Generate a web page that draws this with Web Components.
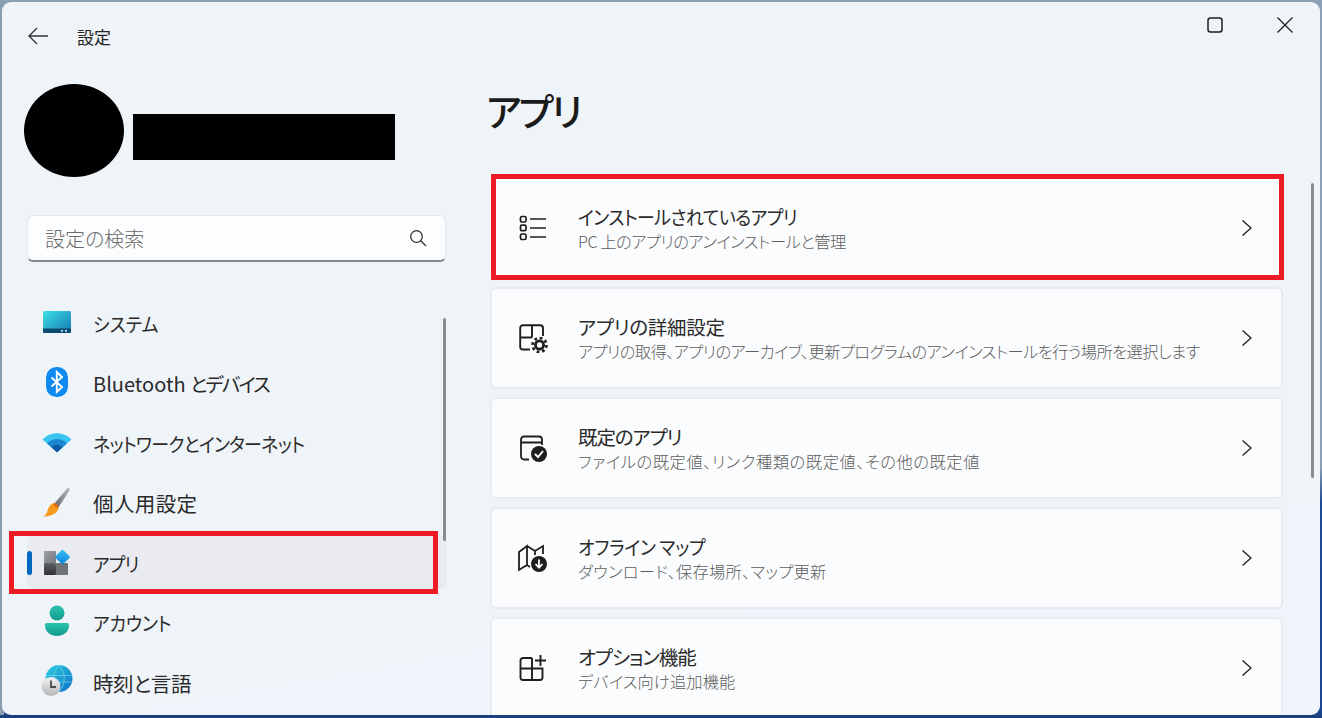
<!DOCTYPE html>
<html lang="ja"><head><meta charset="utf-8"><title>設定</title>
<style>
html,body{margin:0;height:100%;overflow:hidden}
body{font-family:"Noto Sans CJK JP","Noto Sans",sans-serif;color:#1b1b1b}
</style></head><body>
<settings-window>
  <span slot="back-title">設定</span>
  <nav-item slot="nav" icon="system" sx="0.92" ls="0">システム</nav-item>
  <nav-item slot="nav" icon="bluetooth" sx="1" ls="0"><span style="font-size:20px;letter-spacing:0">Bluetooth </span><span style="letter-spacing:-1.8px">とデバイス</span></nav-item>
  <nav-item slot="nav" icon="wifi" sx="0.92" ls="-0.75">ネットワークとインターネット</nav-item>
  <nav-item slot="nav" icon="brush" sx="1" ls="0.4" fs="20.5">個人用設定</nav-item>
  <nav-item slot="nav" icon="apps" selected sx="0.92" ls="-0.85">アプリ</nav-item>
  <nav-item slot="nav" icon="account" sx="0.92" ls="-0.2">アカウント</nav-item>
  <nav-item slot="nav" icon="time" sx="1" ls="-0.4" fs="20.5">時刻と言語</nav-item>
  <setting-card slot="cards" icon="list" highlight title-text="インストールされているアプリ" sx="0.92" tls="-0.6" sls="-0.5" sub="PC 上のアプリのアンインストールと管理"></setting-card>
  <setting-card slot="cards" icon="advanced" title-text="アプリの詳細設定" sx="1" tls="-0.25" sls="-0.59" sub="アプリの取得、アプリのアーカイブ、更新プログラムのアンインストールを行う場所を選択します"></setting-card>
  <setting-card slot="cards" icon="default" title-text="既定のアプリ" sx="1" tls="-1.1" sls="0.54" sub="ファイルの既定値、リンク種類の既定値、その他の既定値"></setting-card>
  <setting-card slot="cards" icon="map" title-text="オフライン マップ" sx="0.92" tls="-0.25" sls="0.24" sub="ダウンロード、保存場所、マップ更新"></setting-card>
  <setting-card slot="cards" icon="optional" title-text="オプション機能" sx="1" tls="-1" sls="0.1" sub="デバイス向け追加機能"></setting-card>
</settings-window>
<script>
const ICONS={
system:`<svg width="30" height="24" viewBox="0 0 30 24"><defs><linearGradient id="s" x1="0" y1="0" x2="1" y2="1"><stop offset="0" stop-color="#3fe0e4"/><stop offset="1" stop-color="#1478b4"/></linearGradient></defs><rect x="1" y="1" width="28" height="22" rx="1.5" fill="url(#s)"/><path d="M1 18.5h28V21.500a1.500 1.500 0 0 1-1.500 1.500h-25A1.500 1.500 0 0 1 1 21.500z" fill="#0d4a6e"/><rect x="19" y="20" width="2" height="1.600" fill="#bfe4f2"/><rect x="23" y="20" width="2" height="1.600" fill="#bfe4f2"/></svg>`,
bluetooth:`<svg width="24" height="32" viewBox="0 0 24 32"><rect x="1" y="1" width="22" height="30" rx="10.500" fill="#0f8af0"/><path d="M6.500 11.500 17 21l-5.200 5V6l5.200 5L6.500 20.500" fill="none" stroke="#fff" stroke-width="1.900"/></svg>`,
wifi:`<svg width="30" height="24" viewBox="0 0 30 24"><path d="M0.500 9.500C8 1 22 1 29.500 9.500L15 22z" fill="#38c5f4"/><path d="M5 13.500C10.500 7.500 19.500 7.500 25 13.500L15 22z" fill="#1c87d0"/><path d="M9.500 17.500C12.500 13.800 17.500 13.800 20.500 17.500L15 22.500z" fill="#0c5ca6"/></svg>`,
brush:`<svg width="30" height="32" viewBox="0 0 30 32"><defs><linearGradient id="b" x1="0" y1="1" x2="1" y2="0"><stop offset="0" stop-color="#5f6368"/><stop offset="1" stop-color="#b9bdc2"/></linearGradient></defs><path d="M12 18 25 2.500c1.500-1.500 3.500.3 2.500 2L16 22z" fill="url(#b)"/><path d="M11 17.500c2-1 5 1 5.500 4.500C16 27 9 31 1 30.500 5 28.500 5 26 6 23c1-3 3-5 5-5.500z" fill="#f59a1c"/><path d="M11 17.500c2-1 5 1 5.500 4.500-2.500-.5-5-2-5.500-4.500z" fill="#e56a12"/></svg>`,
apps:`<svg width="28" height="28" viewBox="0 0 28 28"><defs><linearGradient id="a1" x1="0" y1="0" x2="1" y2="1"><stop offset="0" stop-color="#9ea2a7"/><stop offset="1" stop-color="#74787d"/></linearGradient><linearGradient id="a2" x1="0" y1="0" x2="0" y2="1"><stop offset="0" stop-color="#5e6165"/><stop offset="1" stop-color="#2f3134"/></linearGradient><linearGradient id="a3" x1="0" y1="0" x2="1" y2="1"><stop offset="0" stop-color="#36c3f7"/><stop offset="1" stop-color="#0f7fdb"/></linearGradient></defs><rect x="1" y="3" width="12" height="12" rx="1" fill="url(#a1)"/><rect x="1" y="15" width="12" height="12" rx="1" fill="url(#a2)"/><rect x="13" y="15" width="12" height="12" rx="1" fill="#6f7377"/><rect x="14" y="3.500" width="11" height="11" rx="1" fill="url(#a3)" transform="rotate(45 19.500 9)"/></svg>`,
account:`<svg width="26" height="32" viewBox="0 0 26 32"><defs><linearGradient id="u" x1="0" y1="0" x2="0" y2="1"><stop offset="0" stop-color="#2bc3ad"/><stop offset="1" stop-color="#12998f"/></linearGradient></defs><circle cx="13" cy="8" r="7.500" fill="url(#u)"/><path d="M1 19.500a1.500 1.500 0 0 1 1.500-1.500h21a1.500 1.500 0 0 1 1.500 1.500v1C25 27 19 31 13 31S1 27 1 20.500z" fill="url(#u)"/></svg>`,
time:`<svg width="32" height="32" viewBox="0 0 32 32"><defs><linearGradient id="g" x1="0" y1="0" x2="1" y2="1"><stop offset="0" stop-color="#2fd0e0"/><stop offset="1" stop-color="#0f6fc6"/></linearGradient><linearGradient id="c" x1="0" y1="0" x2="0" y2="1"><stop offset="0" stop-color="#f2f2f2"/><stop offset="1" stop-color="#b6b6b6"/></linearGradient></defs><circle cx="18" cy="13.500" r="13.500" fill="url(#g)"/><path d="M5 10.500h26M5 17h26M18 0c-7 8-7 19 0 27M18 0c7 8 7 19 0 27" stroke="#8fe3ee" stroke-opacity=".55" fill="none"/><circle cx="10" cy="21.500" r="9.500" fill="url(#c)"/><path d="M10 15.500v6.500h5" stroke="#4c4c4c" stroke-width="1.800" fill="none"/></svg>`,
list:`<svg width="28" height="28" viewBox="0 0 28 28" fill="none" stroke="#1f1f1f" stroke-width="1.700"><rect x="1.500" y="2.500" width="5.500" height="5.500" rx="1.300"/><rect x="1.500" y="11.200" width="5.500" height="5.500" rx="1.300"/><rect x="1.500" y="20" width="5.500" height="5.500" rx="1.300"/><path d="M11 5h16M11 14h16M11 23h16"/></svg>`,
advanced:`<svg width="30" height="30" viewBox="0 0 30 30"><path d="M12 26.500H5A2.800 2.800 0 0 1 2.200 23.700V5A2.800 2.800 0 0 1 5 2.200h17.200A2.800 2.800 0 0 1 25 5v8M2.200 14.500H14M14 2.200v12.300" fill="none" stroke="#1f1f1f" stroke-width="1.900"/><circle cx="21.500" cy="22" r="5.500" fill="#1f1f1f"/><circle cx="21.500" cy="22" r="7" fill="none" stroke="#1f1f1f" stroke-width="2.600" stroke-dasharray="2.750 2.750"/><circle cx="21.500" cy="22" r="2.700" fill="#fbfcfe"/></svg>`,
default:`<svg width="30" height="30" viewBox="0 0 30 30"><path d="M11 26.500H6a3 3 0 0 1-3-3v-17a3 3 0 0 1 3-3h15a3 3 0 0 1 3 3V12M3 9.500h21" fill="none" stroke="#1f1f1f" stroke-width="1.800"/><circle cx="21" cy="21" r="8" fill="#1f1f1f"/><path d="M17 21l3 3 5-6" fill="none" stroke="#fff" stroke-width="1.900"/></svg>`,
map:`<svg width="32" height="30" viewBox="0 0 32 30"><path d="M2 9 10 3v19l-8 5V9zM10 3l8 5 8-5v8M18 8v4M10 22l3 2" fill="none" stroke="#1f1f1f" stroke-width="1.800"/><circle cx="22" cy="21" r="8" fill="#1f1f1f"/><path d="M22 16.500v8M18.500 21l3.500 3.700 3.500-3.700" fill="none" stroke="#fff" stroke-width="1.800"/></svg>`,
optional:`<svg width="30" height="30" viewBox="0 0 30 30" fill="none" stroke="#1f1f1f" stroke-width="1.900"><path d="M14 5H5a2.500 2.500 0 0 0-2.500 2.500v17A2.500 2.500 0 0 0 5 27h17a2.500 2.500 0 0 0 2.500-2.500V15.500H2.500M14 5v22"/><path d="M22.500 2v11M17 7.500h11"/></svg>`
};
function def(name,html,init){
  customElements.define(name,class extends HTMLElement{
    constructor(){super();this.attachShadow({mode:"open"}).innerHTML=html;}
    connectedCallback(){init&&init(this,this.shadowRoot);}
  });
}
def("settings-window",`<style>
:host{display:flex;box-sizing:border-box;width:1322px;height:718px;padding:2px 2px 3px 2px;
 background:linear-gradient(to top,#1c3f7e 0 3px,transparent 3px),linear-gradient(to right,#8a9db1 0 4px,transparent 4px),linear-gradient(180deg,#8ba0b4 0,#8ba0b4 65%,#1d4a94 70%,#1b4590 100%)}
.win{flex:1;position:relative;overflow:hidden;border-radius:9px;display:flex;flex-direction:column;background:linear-gradient(170deg,#eff4f9 0%,#eff4f9 70%,#f0f4fc 100%)}
.bar{height:72px;flex:none;display:flex;align-items:center;padding-left:26px;box-sizing:border-box;padding-bottom:4px}
.bar .t{margin-left:28px;font-size:17px;font-feature-settings:"palt";color:#222;font-weight:400}
.bar .ctl{margin-left:auto;display:flex;gap:54px;padding-right:27px;align-items:center;align-self:flex-start;margin-top:15px}
svg{display:block}
.cols{flex:1;display:flex;min-height:0}
.side{width:468px;flex:none;box-sizing:border-box;display:flex;flex-direction:column}
.prof{display:flex;padding:10px 0 0 22px;height:139px;box-sizing:border-box}
.ava{width:100px;height:93px;background:#000;border-radius:50%}
.nm{width:262px;height:46px;background:#000;margin:30px 0 0 9px}
.search{margin:2px 24px 0 25px;height:47px;box-sizing:border-box;background:#fcfdfe;border-radius:6px;border:1px solid #e3e7eb;border-bottom:2px solid #85888c;display:flex;align-items:center;padding:0 18px 0 17px;justify-content:space-between;font-size:20px;color:#6b6b6b;font-feature-settings:"palt";font-weight:300}
.nav{margin-top:33px;padding:0 23px 0 25px;display:flex;flex-direction:column;gap:5.900px}
.main{flex:1;padding-left:20px;padding-right:37px;min-width:0;position:relative}
h1{margin:8px 0 -8px -4px;font-size:38px;font-weight:500;line-height:56px;height:103px;font-feature-settings:"palt";letter-spacing:-2.500px;color:#1b1b1b;box-sizing:border-box}
.cards{display:flex;flex-direction:column;gap:8px}
.thumb{position:absolute;width:3px;border-radius:2px;background:#8a8c8f}
</style>
<div class="win">
 <div class="bar">
  <svg width="21" height="18" viewBox="0 0 21 18" fill="none" stroke="#333" stroke-width="1.300"><path d="M1 9h19M9 1 1 9l8 8"/></svg>
  <span class="t"><slot name="back-title"></slot></span>
  <span class="ctl">
   <svg width="16" height="16" viewBox="0 0 16 16" fill="none" stroke="#1f1f1f" stroke-width="1.500"><rect x="1" y="1" width="14" height="14" rx="2.500"/></svg>
   <svg width="16" height="16" viewBox="0 0 16 16" fill="none" stroke="#1f1f1f" stroke-width="1.300"><path d="M.5.5l15 15M15.500.5l-15 15"/></svg>
  </span>
 </div>
 <div class="cols">
  <div class="side">
   <div class="prof"><div class="ava"></div><div class="nm"></div></div>
   <div class="search"><span>設定の検索</span><svg width="18" height="18" viewBox="0 0 18 18" fill="none" stroke="#333" stroke-width="1.300"><circle cx="7.500" cy="7.500" r="5.800"/><path d="M11.800 11.800 17 17"/></svg></div>
   <div class="nav"><slot name="nav"></slot></div>
  </div>
  <div class="main">
   <h1>アプリ</h1>
   <div class="cards"><slot name="cards"></slot></div>
  </div>
 </div>
 <div class="thumb" style="left:441px;top:316px;height:223px"></div>
 <div class="thumb" style="left:1309px;top:181px;height:295px"></div>
</div>`);
def("nav-item",`<style>
:host{display:flex;position:relative;align-items:center;height:54px;border-radius:6px;font-size:19.500px;font-feature-settings:"palt";color:#2a2a2a;font-weight:400}
:host([selected]){background:#e9ebf0}
.ic{width:60px;margin-right:6px;flex:none;display:flex;justify-content:center;box-sizing:border-box}
.pill{display:none;position:absolute;left:0;top:16px;width:5px;height:24px;border-radius:3px;background:#0067c0}
:host([selected]) .pill{display:block}
.tx{display:inline-block;transform-origin:left center;padding-top:3px;white-space:pre}
.red{display:none;position:absolute;left:-18px;right:9px;top:-4px;bottom:-5px;border:5px solid #ed1c24}
:host([selected]) .red{display:block}
</style><span class="pill"></span><span class="ic"></span><span class="tx"><slot></slot></span><span class="red"></span>`,
(h,s)=>{s.querySelector(".ic").innerHTML=ICONS[h.getAttribute("icon")];const t=s.querySelector(".tx");t.style.letterSpacing=h.getAttribute("ls")+"px";t.style.transform=`scaleX(${h.getAttribute("sx")})`;if(h.hasAttribute("fs"))t.style.fontSize=h.getAttribute("fs")+"px";});
def("setting-card",`<style>
:host{display:flex;position:relative;align-items:center;height:102px;box-sizing:border-box;background:#fbfcfe;border:2px solid #e8ebef;border-radius:6px}
:host([highlight]){border-color:transparent}
.ic{width:82px;margin-right:4px;flex:none;display:flex;justify-content:center;box-sizing:border-box}
.tx{flex:1;display:flex;flex-direction:column;align-items:flex-start;margin-top:2px}
.a{font-size:19.500px;line-height:25px;font-feature-settings:"palt";color:#2a2a2a;font-weight:400;transform-origin:left center;white-space:pre}
.b{font-size:16.300px;line-height:25px;font-feature-settings:"palt";color:#5c5c5c;font-weight:300;white-space:pre}
.chev{padding-right:29px}
.red{display:none;position:absolute;left:-1px;right:-3px;top:-5px;bottom:-3px;border:5px solid #ed1c24}
:host([highlight]) .red{display:block}
</style><span class="ic"></span><span class="tx"><span class="a"></span><span class="b"></span></span>
<svg class="chev" width="11" height="18" viewBox="0 0 11 18" fill="none" stroke="#222" stroke-width="1.400" style="box-sizing:content-box"><path d="M1.500 1.500 10 9l-8.500 7.500"/></svg><span class="red"></span>`,
(h,s)=>{s.querySelector(".ic").innerHTML=ICONS[h.getAttribute("icon")];const a=s.querySelector(".a"),b=s.querySelector(".b");a.textContent=h.getAttribute("title-text");b.textContent=h.getAttribute("sub");a.style.letterSpacing=h.getAttribute("tls")+"px";a.style.transform=`scaleX(${h.getAttribute("sx")})`;b.style.letterSpacing=h.getAttribute("sls")+"px";});
</script>
</body></html>
